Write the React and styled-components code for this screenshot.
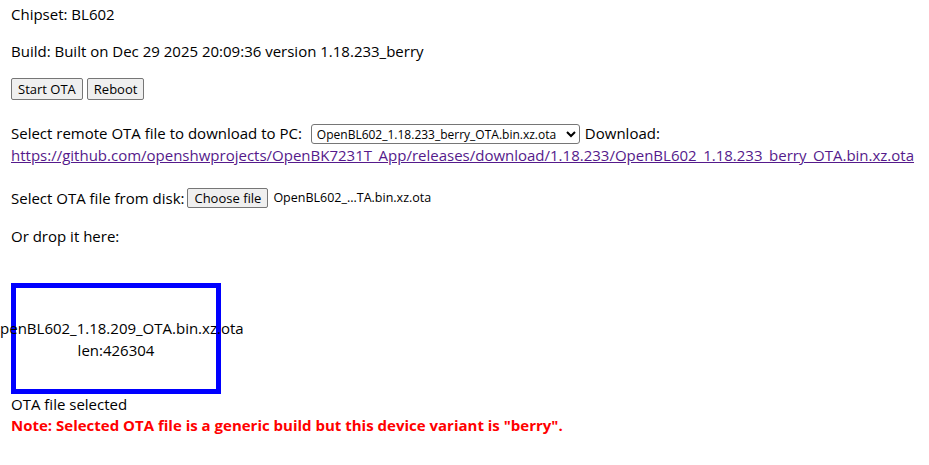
import React from "react";
import styled, { createGlobalStyle } from "styled-components";

const otaName = "OpenBL602_1.18.233_berry_OTA.bin.xz.ota";
const otaUrl =
  "https://github.com/openshwprojects/OpenBK7231T_App/releases/download/1.18.233/" + otaName;

const GlobalStyle = createGlobalStyle`
  body {
    margin: 0;
    background: #fff;
    color: #000;
    font-family: "Open Sans", "Noto Sans", sans-serif;
    font-size: 15px;
  }
`;

const Page = styled.div`
  padding: 4px 11px 0;
  display: flex;
  flex-direction: column;
  align-items: flex-start;
`;

const Para = styled.div`
  line-height: 21px;
  height: 21px;
  white-space: nowrap;
  margin-top: ${(p) => p.$gap || 0}px;
`;

const ButtonRow = styled.div`
  display: flex;
  gap: 4px;
  margin-top: 16px;
`;

const Button = styled.button`
  font-family: "Open Sans", "Noto Sans", sans-serif;
  font-size: 13px;
  line-height: 18px;
  height: 22px;
  padding: 0 6px;
  background: #efefef;
  border: 1px solid #767676;
  border-radius: 2px;
  color: #000;
`;

const SelectLine = styled.div`
  display: flex;
  align-items: center;
  height: 23px;
  margin-top: 22px;
  line-height: 21px;
  white-space: nowrap;
`;

const OtaSelect = styled.select`
  font-family: "Open Sans", "Noto Sans", sans-serif;
  font-size: 12px;
  width: 269px;
  height: 20px;
  margin: 0 5px 0 9px;
  padding: 0 0 0 1px;
  border: 1px solid #767676;
  border-radius: 3px;
  background: #fff;
  color: #000;
`;

const LinkLine = styled.div`
  line-height: 21px;
  height: 21px;
  white-space: nowrap;
`;

const Link = styled.a`
  color: #551a8b;
  text-decoration: underline;
`;

const DiskLine = styled.div`
  display: flex;
  align-items: center;
  height: 21px;
  margin-top: 21px;
  white-space: nowrap;
`;

const FileButton = styled(Button)`
  height: 20px;
  margin-left: 3px;
`;

const FileName = styled.span`
  font-size: 12.5px;
  margin-left: 5px;
`;

const DropZone = styled.div`
  margin-top: 36px;
  width: 200px;
  height: 100px;
  border: 5px solid #0000ff;
  display: flex;
  flex-direction: column;
  align-items: center;
  justify-content: center;
  line-height: 22px;
  white-space: nowrap;
  padding-top: 1px;
  box-sizing: content-box;
`;

const Note = styled.div`
  line-height: 21px;
  color: #ff0000;
  font-weight: 700;
  white-space: nowrap;
`;

export default function App() {
  return (
    <>
      <GlobalStyle />
      <Page>
        <Para>Chipset: BL602</Para>
        <Para $gap={16}>Build: Built on Dec 29 2025 20:09:36 version 1.18.233_berry</Para>
        <ButtonRow>
          <Button>Start OTA</Button>
          <Button>Reboot</Button>
        </ButtonRow>
        <SelectLine>
          Select remote OTA file to download to PC:
          <OtaSelect defaultValue={otaName}>
            <option value={otaName}>{otaName}</option>
          </OtaSelect>
          Download:
        </SelectLine>
        <LinkLine>
          <Link href="#">{otaUrl}</Link>
        </LinkLine>
        <DiskLine>
          Select OTA file from disk:
          <FileButton>Choose file</FileButton>
          <FileName>OpenBL602_...TA.bin.xz.ota</FileName>
        </DiskLine>
        <Para $gap={18}>Or drop it here:</Para>
        <DropZone>
          <span>OpenBL602_1.18.209_OTA.bin.xz.ota</span>
          <span>len:426304</span>
        </DropZone>
        <Para>OTA file selected</Para>
        <Note>Note: Selected OTA file is a generic build but this device variant is "berry".</Note>
      </Page>
    </>
  );
}
